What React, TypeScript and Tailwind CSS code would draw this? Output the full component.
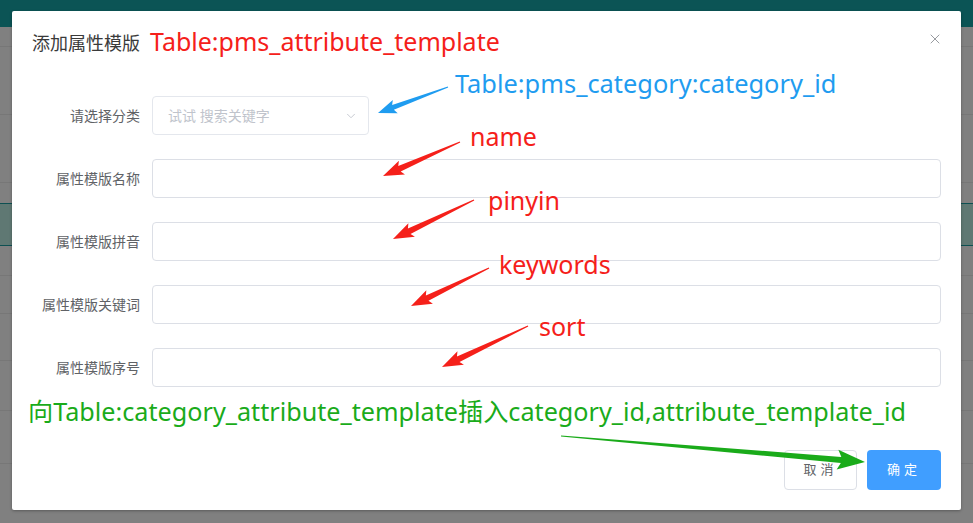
import { ChevronDown, X } from 'lucide-react'

type Pt = [number, number]

// tapered arrow: thin tail, wide head
function arrowPoints(tail: Pt, tip: Pt, tailW: number, neckW: number, headLen: number, headW: number) {
  const dx = tip[0] - tail[0]
  const dy = tip[1] - tail[1]
  const len = Math.hypot(dx, dy)
  const ux = dx / len
  const uy = dy / len
  const nx = -uy
  const ny = ux
  const neck: Pt = [tip[0] - ux * headLen, tip[1] - uy * headLen]
  const barb: Pt = [tip[0] - ux * headLen * 1.15, tip[1] - uy * headLen * 1.15]
  const p = (b: Pt, w: number) => `${b[0] + nx * w / 2},${b[1] + ny * w / 2}`
  return [
    p(tail, tailW),
    p(neck, neckW),
    p(barb, headW),
    `${tip[0]},${tip[1]}`,
    p(barb, -headW),
    p(neck, -neckW),
    p(tail, -tailW),
  ].join(' ')
}

const RED = '#f5201a'
const BLUE = '#1f9cf0'
const GREEN = '#1aab1a'

const ARROWS: { tail: Pt; tip: Pt; color: string; head: number; hw: number; neck: number }[] = [
  { tail: [448, 87], tip: [378, 113], color: BLUE, head: 16, hw: 14, neck: 5 },
  { tail: [460, 142], tip: [383, 176], color: RED, head: 18, hw: 15, neck: 6 },
  { tail: [474, 200], tip: [393, 239], color: RED, head: 18, hw: 15, neck: 6 },
  { tail: [489, 268], tip: [411, 306], color: RED, head: 18, hw: 15, neck: 6 },
  { tail: [528, 326], tip: [442, 367], color: RED, head: 18, hw: 15, neck: 6 },
  { tail: [561, 436], tip: [865, 462], color: GREEN, head: 24, hw: 20, neck: 6 },
]

const FIELDS = ['属性模版名称', '属性模版拼音', '属性模版关键词', '属性模版序号']

const SANS = "font-['Microsoft_YaHei','Noto_Sans','Noto_Sans_CJK_SC',sans-serif]"

export default function App() {
  return (
    <div className={`relative h-[523px] w-[973px] overflow-hidden bg-[#808080] ${SANS}`}>
      {/* page behind the mask */}
      <div className="flex flex-col">
        <div className="h-[27px] bg-[#0b5455]" />
        <div className="h-[20px] border-b border-[#777]" />
        <div className="h-[68px] border-b border-[#777]" />
        <div className="h-[68px] border-b border-[#777]" />
        <div className="h-[20px]" />
        <div className="h-[43px] border-y border-[#0d5052] bg-[#5f7873]" />
        <div className="h-[30px] border-b border-[#777]" />
        <div className="h-[38px] border-b border-[#777]" />
        <div className="h-[47px] border-b border-[#777]" />
        <div className="h-[50px] border-b border-[#777]" />
        <div className="h-[53px] border-b border-[#777]" />
      </div>

      {/* dialog */}
      <div className="absolute left-[12px] top-[11px] flex h-[499px] w-[949px] flex-col rounded-[2px] bg-white shadow-[0_1px_3px_rgba(0,0,0,0.3)]">
        <div className="flex items-center justify-between px-[20px] pt-[20px]">
          <span className="text-[18px] leading-[24px] text-[#3a3a3a]">添加属性模版</span>
          <X className="mr-[-2px] mt-[-8px] h-[16px] w-[16px] text-[#909399]" strokeWidth={1.4} />
        </div>

        <div className="flex flex-col gap-[24px] px-[20px] pt-[41px]">
          <div className="flex items-center">
            <label className="w-[120px] pr-[12px] text-right text-[14px] text-[#606266]">请选择分类</label>
            <div className="flex h-[39px] w-[217px] items-center justify-between rounded-[4px] border border-[#e4e7ed] pl-[15px] pr-[10px]">
              <span className="text-[14px] text-[#c0c4cc]">试试 搜索关键字</span>
              <ChevronDown className="h-[14px] w-[14px] text-[#c0c4cc]" strokeWidth={1.5} />
            </div>
          </div>
          {FIELDS.map((f) => (
            <div key={f} className="flex items-center">
              <label className="w-[120px] shrink-0 pr-[12px] text-right text-[14px] text-[#606266]">{f}</label>
              <div className="h-[39px] flex-1 rounded-[4px] border border-[#dcdfe6]" />
            </div>
          ))}
        </div>

        <div className="mt-auto flex justify-end gap-[10px] px-[20px] pb-[20px]">
          <button className="h-[40px] w-[73px] rounded-[4px] border border-[#dcdfe6] bg-white text-[13px] tracking-[4px] text-[#606266]">取消</button>
          <button className="h-[40px] w-[74px] rounded-[4px] bg-[#409eff] text-[13px] tracking-[4px] text-white">确定</button>
        </div>
      </div>

      {/* annotations */}
      <div className="absolute left-[150px] top-[25px] text-[25px] leading-[32px] text-[#f5201a]">Table:pms_attribute_template</div>
      <div className="absolute left-[455px] top-[67px] text-[25.4px] leading-[32px] text-[#1f9cf0]">Table:pms_category:category_id</div>
      <div className="absolute left-[470px] top-[120px] text-[25px] leading-[32px] text-[#f5201a]">name</div>
      <div className="absolute left-[488px] top-[184px] text-[25px] leading-[32px] text-[#f5201a]">pinyin</div>
      <div className="absolute left-[499px] top-[248px] text-[25px] leading-[32px] text-[#f5201a]">keywords</div>
      <div className="absolute left-[539px] top-[310px] text-[25px] leading-[32px] text-[#f5201a]">sort</div>
      <div className="absolute left-[28px] top-[395px] text-[25.2px] leading-[32px] text-[#1aab1a]">
        向Table:category_attribute_template插入category_id,attribute_template_id
      </div>
      <svg className="pointer-events-none absolute left-0 top-0" width={973} height={523}>
        {ARROWS.map((a, i) => (
          <polygon key={i} points={arrowPoints(a.tail, a.tip, 1.2, a.neck, a.head, a.hw)} fill={a.color} />
        ))}
      </svg>
    </div>
  )
}
